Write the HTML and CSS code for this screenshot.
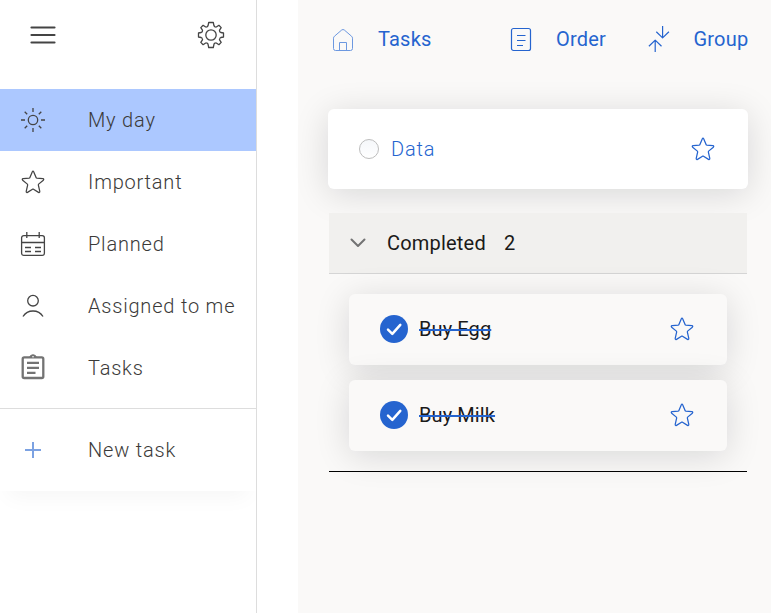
FILE: index.html
```html
<!DOCTYPE html>
<html lang="en">
<head>
<meta charset="utf-8">
<title>My day</title>
<link rel="stylesheet" href="styles.css">
</head>
<body>
<svg class="defs" width="0" height="0">
  <symbol id="star" viewBox="-.4 -.4 24.800 24.800"><path d="M11.2 1.6q.8-1.5 1.6 0l2.5 6 .5.4 6.400.6q1.500.3.5 1.500L17.800 14.200l-.3.8 1.500 6.600q.1 1.700-1.300 1.100L12.500 19.400h-1L6.300 22.700q-1.400.6-1.300-1.100L6.500 15l-.3-.8L1.300 10.100q-1-1.200.5-1.500L8.200 8l.5-.4z"/></symbol>
</svg>
<div class="app">
  <aside class="sidebar">
    <header class="top">
      <svg class="burger" width="28" height="20" viewBox="0 0 28 20"><path d="M2.500 2.500h23M2.500 10h23M2.500 17.500h23"/></svg>
      <svg class="line" width="28" height="28" viewBox="0 0 28 28"><circle cx="14" cy="14" r="5.200"/><path d="M11.700 1.500h4.600l.7 3.300q.2.700 1 1l.5.200q.6.200 1.200-.2l2.200-1.500 2.300 2.300-1.500 2.300q-.4.600-.1 1.200l.3.600q.2.600.9.800l2.700.5v4l-2.700.5q-.7.200-.9.800l-.3.700q-.3.600.1 1.200l1.500 2.200-2.300 2.300-2.200-1.500q-.6-.4-1.200-.2l-.5.200q-.8.300-1 1l-.7 3.300h-4.600l-.7-3.300q-.2-.7-1-1l-.5-.2q-.6-.2-1.200.2l-2.200 1.500-2.300-2.300 1.500-2.200q.4-.6.1-1.200l-.3-.7q-.2-.6-.9-.8l-2.700-.5v-4l2.700-.5q.7-.2.900-.8l.3-.6q.3-.6-.1-1.200L3.800 6.600l2.300-2.300 2.200 1.500q.6.400 1.200.2l.5-.2q.8-.3 1-1z"/></svg>
    </header>
    <nav>
      <a class="item active"><svg class="line" width="26" height="26" viewBox="0 0 26 26"><circle cx="13" cy="13" r="4.700"/><path d="M13 1v4M13 21v4M1 13h4M21 13h4M4.700 4.700l2.500 2.500M18.800 18.800l2.500 2.500M4.700 21.300l2.500-2.500M18.800 7.200l2.500-2.500"/></svg>My day</a>
      <a class="item"><svg class="line" width="26" height="26" viewBox="-1 -1 26 26"><use href="#star" width="24" height="24"/></svg>Important</a>
      <a class="item"><svg class="line" width="26" height="26" viewBox="0 0 26 26"><path d="M6.800 1v6M19.200 1v6"/><rect x="1.600" y="4.600" width="22.800" height="19.800" rx="2.200"/><path d="M1.500 11.500h23M5 16.500h6M15 16.500h6M5 20.500h6M15 20.500h6"/></svg>Planned</a>
      <a class="item"><svg class="line" width="26" height="26" viewBox="0 0 26 26"><circle cx="13" cy="7.700" r="5.300"/><path d="M3 23.500C5.500 19.500 9 18 13 18s7.500 1.500 10 5.500"/></svg>Assigned to me</a>
      <a class="item"><svg class="clip" width="26" height="26" viewBox="0 0 26 26"><path d="M9.500 3.500a3.600 3.600 0 0 1 7 0z" class="fill"/><rect x="2.700" y="3.400" width="20.600" height="20.600" rx="1.500"/><path d="M7 8.900h12M7 13.900h12M7 18.900h8.500"/><circle cx="13" cy="2.700" r=".8" class="hole"/></svg>Tasks</a>
    </nav>
    <div class="new"><svg width="26" height="26" viewBox="0 0 26 26"><path d="M5 13h16M13 5v16"/></svg>New task</div>
  </aside>
  <main>
    <div class="tools">
      <a class="tool home"><svg width="26" height="28" viewBox="0 -2 26 28"><path class="thin" d="M3.500 11.200q0-1.200 1-2L11.700 3q1.300-1 2.600 0l7.200 6.200q1 .8 1 2v10.300q0 2-2 2H5.500q-2 0-2-2zM9.500 23.500v-8h7v8"/></svg>Tasks</a>
      <a class="tool order"><svg width="26" height="28" viewBox="0 -1 26 28"><rect x="3.500" y="2.500" width="19" height="22" rx="2"/><path d="M9 9.500h8.500M9 14.500h8.500M9 19.500h6"/></svg>Order</a>
      <a class="tool group"><svg width="26" height="28" viewBox="0 0 26 28"><path d="M16.600 1v12M10.300 6.700l6.300 6.200L22.900 6.700M9.200 27v-12M2.900 21.300l6.300-6.200 6.300 6.200"/></svg>Group</a>
    </div>
    <div class="card data"><span class="radio"></span><span class="label">Data</span><svg class="star" width="24" height="24"><use href="#star"/></svg></div>
    <section class="done">
      <div class="head"><svg width="18" height="12" viewBox="0 0 18 12"><path d="M2.500 2.500L9 9l6.500-6.500"/></svg><span>Completed</span><span class="count">2</span></div>
      <div class="card task"><svg class="check" width="28" height="28" viewBox="0 0 28 28"><circle cx="14" cy="14" r="14"/><path d="M8 14.700l4.300 4.200 8-9"/></svg><span class="label">Buy Egg</span><svg class="star" width="24" height="24"><use href="#star"/></svg></div>
      <div class="card task"><svg class="check" width="28" height="28" viewBox="0 0 28 28"><circle cx="14" cy="14" r="14"/><path d="M8 14.700l4.300 4.200 8-9"/></svg><span class="label">Buy Milk</span><svg class="star" width="24" height="24"><use href="#star"/></svg></div>
    </section>
  </main>
</div>
</body>
</html>
```
FILE: styles.css
```css
* { box-sizing: border-box; }
body { margin: 0; background: #fff; font: 300 20px/24px Roboto, sans-serif; letter-spacing: .8px; color: #3b3a39; overflow: hidden; }
svg { flex: none; fill: none; stroke: #2564cf; stroke-width: 1.2; stroke-linejoin: round; }
.defs { position: absolute; }
.app { display: flex; height: 613px; }
.sidebar { width: 257px; border-right: 1px solid #ddd; overflow: hidden; }
.top { height: 89px; padding: 21px 31px 0 29px; display: flex; justify-content: space-between; }
.top .burger { margin-top: 4px; stroke: #444; stroke-width: 2.2; stroke-linecap: round; }
svg.line { stroke: #444; stroke-width: 1.3; }
.item, .new { display: flex; align-items: center; height: 62px; padding-left: 20px; gap: 42px; white-space: nowrap; }
.active { background: #acc8ff; }
.clip { stroke: #737373; stroke-width: 2.300; margin-top: -3px; }
.clip .fill { fill: #737373; stroke-width: 1; }
.clip .hole { fill: #fff; stroke: none; }
nav { padding-bottom: 9px; border-bottom: 1px solid #ddd; }
.new { height: 82px; box-shadow: 0 14px 22px -8px rgba(0,0,0,.04); }
.new svg { stroke-width: 2; stroke: #7ca2e2; }
main { flex: 1; margin-left: 41px; padding: 25px 23px 0 30px; background: #faf9f8; }
.tools { display: flex; height: 84px; margin-right: -10px; color: #2564cf; font-weight: 400; letter-spacing: .2px; }
.tool { display: flex; height: 28px; align-items: center; }
.tool svg { margin-right: 22px; }
.tool .thin { stroke-width: 1; stroke: #6c98e0; }
.home { width: 178px; padding-left: 2px; }
.order { width: 139px; padding-left: 2px; }
.group { padding-left: .5px; }
.card { display: flex; align-items: center; border-radius: 6px; box-shadow: 0 5px 35px rgba(10,15,20,.14); }
.star { margin-left: auto; stroke-width: 1.3; }
.data { height: 80px; background: #fff; padding: 0 33px 0 31px; color: #2564cf; }
.radio { width: 20px; height: 20px; border: 1px solid #bdbdbd; border-radius: 50%; background: linear-gradient(#f5f7fa, #fff); margin-right: 12px; }
.done { margin: 24px 1px 0; border-bottom: 1px solid #000; height: 259px; font-weight: 400; color: #1b1a19; }
.head { height: 61px; margin-bottom: 20px; padding-left: 20px; display: flex; align-items: center; background: #f1f0ee; border-bottom: 1px solid #d5d5d5; letter-spacing: .2px; }
.head svg { margin-right: 20px; stroke: #737373; stroke-width: 2; stroke-linecap: round; }
.count { margin-left: 18px; }
.task { height: 71px; margin: 0 20px 15px; padding: 0 33px 1px 31px; background: #faf9f8; letter-spacing: .1px; }
.check { fill: #2564cf; stroke: none; margin-right: 11px; }
.check path { fill: none; stroke: #fff; stroke-width: 2.500; stroke-linecap: round; }
.task .label { text-decoration: line-through 2px #2564cf; }
```
